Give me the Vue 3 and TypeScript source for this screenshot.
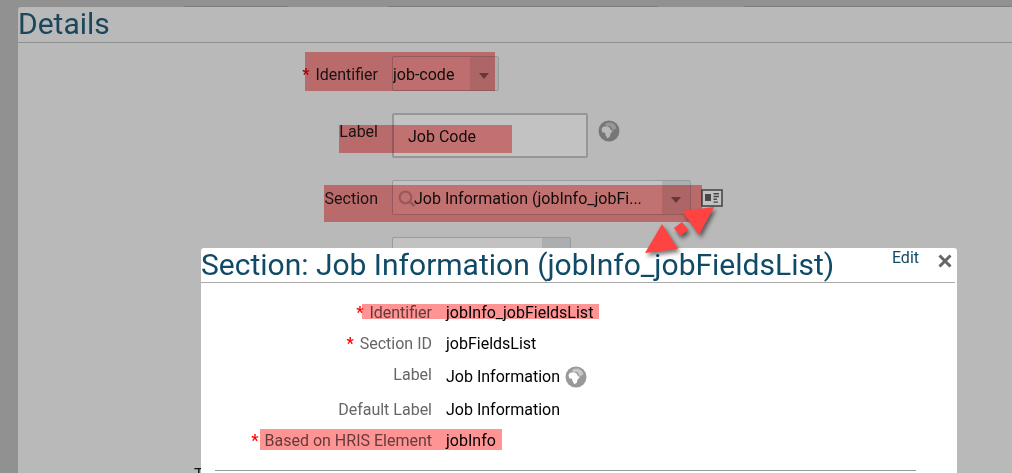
<script setup lang="ts">
import { ref } from 'vue'

interface Field {
  label: string
  value: string
  required?: boolean
  translatable?: boolean
}

const identifier = ref('job-code')
const label = ref('Job Code')
const section = ref('Job Information (jobInfo_jobFi...')

const africa = 'M3.5 9 5 6.8l4-.6 2.6 1.4 1.3 2.4 1.9.9-2.4 2.8-.6 3-2.5 1.6-1.8-3.3-.5-2.2-2.8-.5z'
const europe = 'M6.5 5 9 2.8l4.5-.3L17 5l1.5 3.5-2 .8-1.3 1.5-1.4-2L12.4 6l-3 .2z'

const fields: Field[] = [
  { label: 'Identifier', value: 'jobInfo_jobFieldsList', required: true },
  { label: 'Section ID', value: 'jobFieldsList', required: true },
  { label: 'Label', value: 'Job Information', translatable: true },
  { label: 'Default Label', value: 'Job Information' },
  { label: 'Based on HRIS Element', value: 'jobInfo', required: true },
]
</script>

<template>
  <div class="page">
    <div class="strip"><span class="tab tab-a"></span><span class="tab tab-b"></span><span class="tab tab-c"></span></div>
    <main class="details">
      <h1 class="title">Details</h1>
      <form class="form" @submit.prevent>
        <label class="name" for="identifier"><span class="star">*</span> Identifier</label>
        <div class="control">
          <div class="picker picker-small">
            <select id="identifier" v-model="identifier" class="field"><option>job-code</option></select>
            <span class="trigger"><svg width="12" height="6" viewBox="0 0 12 6"><path d="M1 0h10L6 6z" fill="#626262" /></svg></span>
          </div>
        </div>

        <label class="name raised" for="label">Label</label>
        <div class="control">
          <input id="label" v-model="label" class="textbox" type="text" />
          <button class="icon-button" type="button" aria-label="Translations">
            <svg width="22" height="22" viewBox="0 0 22 22">
              <circle cx="11" cy="11" r="10.5" fill="#777" />
              <path :d="africa" fill="#b9b9b9" />
              <path :d="europe" fill="#989898" />
            </svg>
          </button>
        </div>

        <label class="name" for="section">Section</label>
        <div class="control">
          <div class="picker picker-wide">
            <svg class="lens" width="18" height="18" viewBox="0 0 18 18"><circle cx="7.5" cy="7.5" r="5.8" fill="none" stroke="#999" stroke-width="2.2" /><path d="m11.5 11.5 5 4.5" stroke="#999" stroke-width="3" /></svg>
            <input id="section" v-model="section" class="field" type="text" />
            <button class="trigger" type="button" aria-label="Open list"><svg width="12" height="6" viewBox="0 0 12 6"><path d="M1 0h10L6 6z" fill="#626262" /></svg></button>
          </div>
          <button class="icon-button card-button" type="button" aria-label="Show section">
            <svg width="22" height="18" viewBox="0 0 22 18">
              <rect x="1" y="1" width="20" height="16" fill="#c2c2c2" stroke="#484848" stroke-width="1.6" />
              <path d="M4 5h6v7H4zM12.5 4H18v1.4h-5.5zM12.5 6.8H18v1.4h-5.5zM12.5 9.6H16V11h-3.5zM12.5 12.4H17v1.4h-4.5z" fill="#484848" />
            </svg>
          </button>
        </div>

        <span class="name"></span>
        <div class="control">
          <div class="picker picker-mid">
            <select class="field" aria-label="Type"></select>
            <span class="trigger"></span>
          </div>
        </div>
      </form>
      <p class="footer-label">T</p>
    </main>

    <section class="dialog" role="dialog" aria-labelledby="dialog-title">
      <header class="dialog-head">
        <h2 id="dialog-title" class="title">Section: Job Information (jobInfo_jobFieldsList)</h2>
        <a class="edit" href="#">Edit</a>
        <button class="close" type="button" aria-label="Close">
          <svg width="14" height="14" viewBox="0 0 14 14"><path d="m1.5 1.5 11 11m0-11-11 11" stroke="#666" stroke-width="3" /></svg>
        </button>
      </header>
      <dl class="list">
        <div v-for="field in fields" :key="field.label" class="row">
          <dt><span v-if="field.required" class="star">*</span> {{ field.label }}</dt>
          <dd>
            {{ field.value }}
            <svg v-if="field.translatable" class="globe" width="22" height="22" viewBox="0 0 22 22">
              <circle cx="11" cy="11" r="10.5" fill="#999" />
              <path :d="africa" fill="#fff" />
              <path :d="europe" fill="#c8c8c8" />
            </svg>
          </dd>
        </div>
      </dl>
      <hr class="rule" />
    </section>

    <span class="mark mark-identifier"></span>
    <span class="mark mark-label"></span>
    <span class="mark mark-section"></span>
    <span class="mark mark-dialog-identifier"></span>
    <span class="mark mark-dialog-element"></span>

    <svg class="arrow" width="90" height="70" viewBox="640 200 90 70">
      <path d="m645 253 17-29 16 25zM714 207l-32 4 17 24zM674 228l8-6 6 8-8 6z" fill="#ff4343" />
    </svg>
  </div>
</template>

<style>
body {
  margin: 0;
}
</style>

<style scoped>
.page {
  position: relative;
  box-sizing: border-box;
  height: 100vh;
  padding-left: 18px;
  overflow: hidden;
  background: #919191;
  color: #1c1c1c;
  font: 16px/20px Roboto, "Liberation Sans", sans-serif;
}
.strip {
  display: flex;
  align-items: flex-end;
  height: 7px;
}
.tab {
  height: 1px;
  background: #7d7d7d;
}
.tab-a {
  width: 104px;
  margin-left: 166px;
}
.tab-b {
  width: 270px;
  margin-left: 100px;
}
.tab-c {
  flex: 1;
  margin-left: 86px;
}
.details {
  height: 100%;
  border-top-left-radius: 3px;
  background: #b9b9b9;
}
.title {
  margin: 0;
  color: #0f4a66;
  font-size: 30px;
  font-weight: 400;
  line-height: 34px;
  white-space: nowrap;
}
.details > .title {
  padding-bottom: 1px;
  border-bottom: 1px solid #8f8f8f;
  color: #1b465b;
}
.form {
  display: grid;
  grid-template-columns: 360px 1fr;
  gap: 22px 14px;
  padding-top: 13px;
}
.name {
  align-self: center;
  padding-top: 2px;
  text-align: right;
}
.raised {
  padding-bottom: 10px;
}
.star {
  margin-right: 2px;
  color: #a80000;
  font-weight: 700;
}
.control {
  display: flex;
  align-items: center;
}
.picker {
  display: flex;
  box-sizing: border-box;
  height: 35px;
  border: 1px solid #969b9e;
  border-radius: 2px;
  background: #c2c2c2;
}
.picker-small {
  width: 107px;
  background: #bebebe;
}
.picker-wide {
  width: 299px;
}
.picker-mid {
  width: 179px;
}
.field {
  flex: 1;
  min-width: 0;
  padding: 2px 0 0;
  border: 0;
  outline: 0;
  appearance: none;
  background: none;
  color: #111;
  font: inherit;
}
.lens {
  flex: none;
  align-self: center;
  margin: 2px -2px 0 5px;
}
.trigger {
  display: flex;
  flex: none;
  align-items: center;
  justify-content: center;
  width: 28px;
  padding: 4px 0 0;
  box-sizing: border-box;
  border: 0;
  background: #adaeb0;
}
.textbox {
  box-sizing: border-box;
  width: 196px;
  height: 45px;
  padding: 2px 14px 0;
  border: 2px solid #93979a;
  border-radius: 2px;
  background: #c2c2c2;
  color: #111;
  font: inherit;
}
.icon-button {
  display: flex;
  margin: 0 0 10px 10px;
  padding: 0;
  border: 0;
  background: none;
}
.card-button {
  margin-bottom: 0;
}
.footer-label {
  margin: 193px 0 0 176px;
  color: #111;
}
.dialog {
  position: absolute;
  top: 248px;
  right: 55px;
  bottom: 0;
  left: 201px;
  border-radius: 3px 3px 0 0;
  background: #fff;
}
.dialog-head {
  display: flex;
  align-items: flex-start;
  margin-right: 2px;
  border-bottom: 1px solid #aaa;
}
.dialog-head .title {
  flex: 1;
}
.edit {
  color: #0f4a66;
  text-decoration: none;
}
.close {
  display: flex;
  margin: 6px 3px 0 19px;
  padding: 0;
  border: 0;
  background: none;
}
.list {
  margin: 14px 0 0;
}
.row {
  display: grid;
  grid-template-columns: 231px 1fr;
  gap: 14px;
  min-height: 31px;
  line-height: 31px;
}
.row dt {
  color: #666;
  text-align: right;
}
.row .star {
  color: #f00;
}
.row dd {
  display: flex;
  align-items: center;
  gap: 5px;
  margin: 0;
  color: #000;
}
.globe {
  padding: 7px 0 6px;
}
.rule {
  margin: 14px 41px 0 14px;
  border: 0;
  border-top: 1px solid #999;
}
.mark {
  position: absolute;
  background: #ff9494;
  mix-blend-mode: multiply;
  pointer-events: none;
}
.mark-identifier {
  top: 52px;
  left: 305px;
  width: 190px;
  height: 39px;
}
.mark-label {
  top: 125px;
  left: 339px;
  width: 173px;
  height: 28px;
}
.mark-section {
  top: 185px;
  left: 324px;
  width: 378px;
  height: 37px;
}
.mark-dialog-identifier {
  top: 304px;
  left: 362px;
  width: 237px;
  height: 15px;
}
.mark-dialog-element {
  top: 429px;
  left: 260px;
  width: 242px;
  height: 21px;
}
.arrow {
  position: absolute;
  top: 200px;
  left: 640px;
  filter: drop-shadow(2px 3px 2px #0008);
  pointer-events: none;
}
</style>
